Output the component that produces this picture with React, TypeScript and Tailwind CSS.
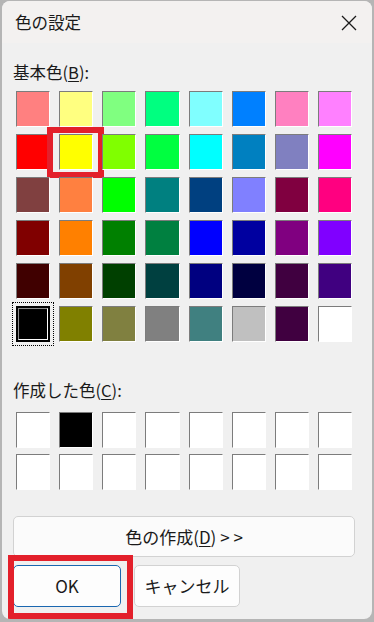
import React from 'react';

const basicColors = [
  ['#ff8080', '#ffff80', '#80ff80', '#00ff80', '#80ffff', '#0080ff', '#ff80c0', '#ff80ff'],
  ['#ff0000', '#ffff00', '#80ff00', '#00ff40', '#00ffff', '#0080c0', '#8080c0', '#ff00ff'],
  ['#804040', '#ff8040', '#00ff00', '#008080', '#004080', '#8080ff', '#800040', '#ff0080'],
  ['#800000', '#ff8000', '#008000', '#008040', '#0000ff', '#0000a0', '#800080', '#8000ff'],
  ['#400000', '#804000', '#004000', '#004040', '#000080', '#000040', '#400040', '#400080'],
  ['#000000', '#808000', '#808040', '#808080', '#408080', '#c0c0c0', '#400040', '#ffffff'],
];

const customColors = [
  '#ffffff', '#000000', '#ffffff', '#ffffff', '#ffffff', '#ffffff', '#ffffff', '#ffffff',
  '#ffffff', '#ffffff', '#ffffff', '#ffffff', '#ffffff', '#ffffff', '#ffffff', '#ffffff',
];

function Swatch({ color, selected, marked }: { color: string; selected?: boolean; marked?: boolean }) {
  if (selected) {
    return (
      <div className="relative h-[36px] outline-1 outline-dotted outline-black outline-offset-[3px]">
        <div className="h-full border-2 border-black">
          <div
            className="h-full border border-t-[#8a8a8a] border-l-[#8a8a8a] border-b-white border-r-white"
            style={{ backgroundColor: color }}
          />
        </div>
      </div>
    );
  }
  return (
    <div className="relative h-[36px]">
      <div
        className="h-full border-[1.5px] border-t-[#7c7c7c] border-l-[#7c7c7c] border-b-white border-r-white"
        style={{ backgroundColor: color }}
      />
      {marked && (
        <div className="absolute -left-[12px] -right-[11px] -top-[7px] -bottom-[8px] border-[6px] border-[#e3202b]" />
      )}
    </div>
  );
}

export default function App() {
  return (
    <div
      className="w-[374px] h-[622px] bg-[#b5b5b5] pl-[2px] pt-[1px] text-[#1a1a1a]"
      style={{ fontFamily: '"Noto Sans CJK JP", "Noto Sans", sans-serif' }}
    >
      <div className="w-[370px] h-[618px] rounded-[8px] bg-[#f0f0f0] flex flex-col overflow-hidden">
        <div className="h-[42px] bg-[#f3f1f0] flex items-center justify-between pl-[13px] pr-[15px]">
          <span className="text-[16.5px] leading-[20px]">色の設定</span>
          <svg width="16" height="16" viewBox="0 0 16 16" className="mt-[1px]">
            <path d="M1 1 L15 15 M15 1 L1 15" stroke="#1a1a1a" strokeWidth="1.3" fill="none" />
          </svg>
        </div>

        <div className="mt-[19px] ml-[11px] h-[20px] text-[16.5px] leading-[20px]">
          基本色(<span className="underline underline-offset-2">B</span>):
        </div>

        <div className="mt-[9px] ml-[14px] w-[336px] grid grid-cols-8 gap-x-[9px] gap-y-[7px]">
          {basicColors.flatMap((row, r) =>
            row.map((c, i) => (
              <Swatch key={`${r}-${i}`} color={c} selected={r === 5 && i === 0} marked={r === 1 && i === 1} />
            )),
          )}
        </div>

        <div className="mt-[38px] ml-[11px] h-[20px] text-[16.5px] leading-[20px]">
          作成した色(<span className="underline underline-offset-2">C</span>):
        </div>

        <div className="mt-[12px] ml-[14px] w-[336px] grid grid-cols-8 gap-x-[9px] gap-y-[6px]">
          {customColors.map((c, i) => (
            <Swatch key={i} color={c} />
          ))}
        </div>

        <button className="mt-[26px] ml-[11px] w-[342px] h-[41px] rounded-[5px] border border-[#d2d2d2] bg-[#fbfbfb] text-[17px] leading-[20px]">
          色の作成(<span className="underline underline-offset-2">D</span>) &gt; &gt;
        </button>

        <div className="mt-[8px] ml-[11px] flex gap-[13px]">
          <div className="relative">
            <button className="w-[108px] h-[42px] rounded-[5px] border border-[#1a67b0] bg-[#fdfdfd] text-[17px] leading-[20px]">
              OK
            </button>
            <div className="absolute -left-[5px] -right-[12px] -top-[10px] -bottom-[12px] border-[6px] border-[#e3202b]" />
          </div>
          <button className="w-[106px] h-[42px] rounded-[5px] border border-[#d2d2d2] bg-[#fdfdfd] text-[17px] leading-[20px]">
            キャンセル
          </button>
        </div>
      </div>
    </div>
  );
}
